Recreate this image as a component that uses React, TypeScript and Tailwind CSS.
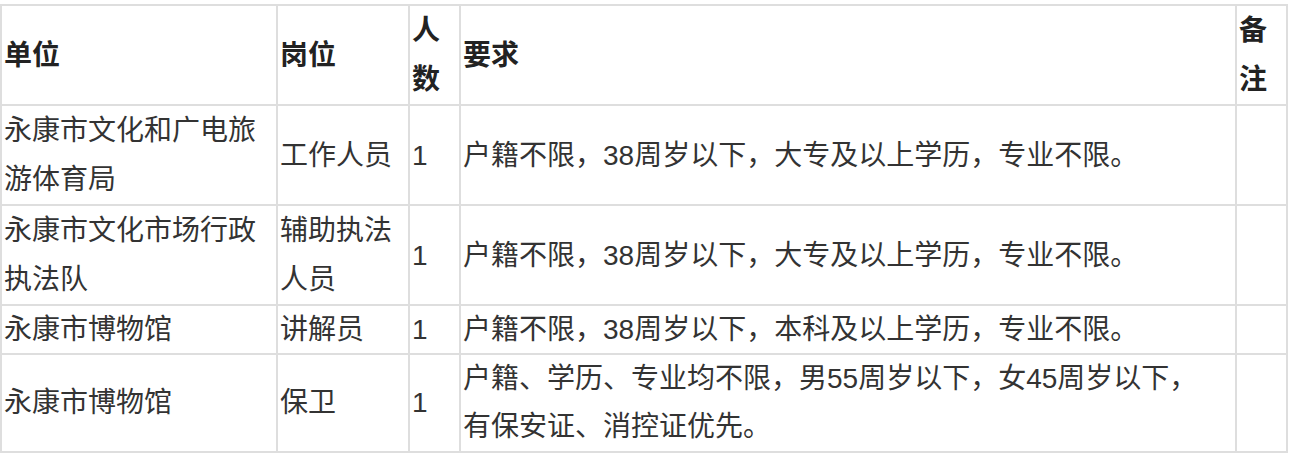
const rows = [
  { unit: "永康市文化和广电旅游体育局", post: "工作人员", num: "1", req: "户籍不限，38周岁以下，大专及以上学历，专业不限。", note: "", lh: "leading-[49px]" },
  { unit: "永康市文化市场行政执法队", post: "辅助执法人员", num: "1", req: "户籍不限，38周岁以下，大专及以上学历，专业不限。", note: "", lh: "leading-[49px]" },
  { unit: "永康市博物馆", post: "讲解员", num: "1", req: "户籍不限，38周岁以下，本科及以上学历，专业不限。", note: "", lh: "leading-[47px]" },
  { unit: "永康市博物馆", post: "保卫", num: "1", req: "户籍、学历、专业均不限，男55周岁以下，女45周岁以下，有保安证、消控证优先。", note: "", lh: "leading-[48px]" },
];

const cell = "border-2 border-[#dedede] pl-[2px] pr-[3px] py-0 align-middle break-all";
const head = `${cell} text-left font-bold text-[#222222] leading-[49px]`;

export default function App() {
  return (
    <div className="bg-white w-[1291px] h-[455px] pt-[4px]">
      <table
        className="table-fixed border-collapse text-[28px] text-[#333333]"
        style={{ fontFamily: '"Liberation Sans", "Noto Sans CJK SC", sans-serif' }}
      >
        <colgroup>
          <col className="w-[276px]" />
          <col className="w-[132px]" />
          <col className="w-[51px]" />
          <col className="w-[776px]" />
          <col className="w-[51px]" />
        </colgroup>
        <thead>
          <tr>
            <th className={head}>单位</th>
            <th className={head}>岗位</th>
            <th className={head}>人数</th>
            <th className={head}>要求</th>
            <th className={head}>备注</th>
          </tr>
        </thead>
        <tbody>
          {rows.map((r, i) => (
            <tr key={i} className={r.lh}>
              <td className={cell}>{r.unit}</td>
              <td className={cell}>{r.post}</td>
              <td className={cell}>{r.num}</td>
              <td className={`${cell} pr-[14px]`}>{r.req}</td>
              <td className={cell}>{r.note}</td>
            </tr>
          ))}
        </tbody>
      </table>
    </div>
  );
}
